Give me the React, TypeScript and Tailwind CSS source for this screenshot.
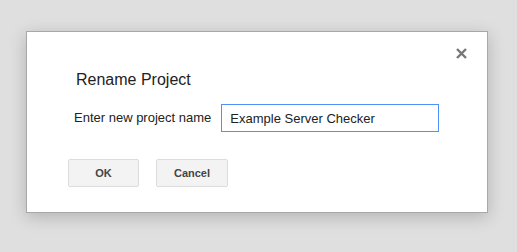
import { useState } from 'react'

export default function App() {
  const [name, setName] = useState('Example Server Checker')

  return (
    <div
      className="w-[517px] h-[252px] bg-[#dfdfdf] pt-[31px] pl-[26px]"
      style={{ fontFamily: '"Liberation Sans", Arial, sans-serif' }}
    >
      <div className="w-[462px] h-[182px] bg-white border border-[#a8a8a8] shadow-[0_4px_16px_rgba(0,0,0,0.2)] pt-[16px]">
        <div className="flex justify-end pr-[20px] h-[11px]">
          <button type="button" aria-label="Close" className="block w-[11px] h-[11px]">
            <svg width="11" height="11" viewBox="0 0 11 11" aria-hidden>
              <path d="M1 1L10 10M10 1L1 10" stroke="#777" strokeWidth="2.4" />
            </svg>
          </button>
        </div>

        <h2 className="mt-[12px] pl-[49px] text-[16px] leading-[18px] text-[#222] font-normal">
          Rename Project
        </h2>

        <div className="mt-[15px] pl-[47px] flex items-center gap-[10px]">
          <label className="text-[13px] text-[#222]">Enter new project name</label>
          <input
            value={name}
            onChange={e => setName(e.target.value)}
            className="w-[218px] h-[28px] border border-[#4d90fe] px-[8px] text-[13px] text-[#222] outline-none"
          />
        </div>

        <div className="mt-[27px] pl-[41px] flex gap-[17px]">
          <button
            type="button"
            className="w-[71px] h-[28px] rounded-[2px] border border-[#dcdcdc] bg-[#f3f3f3] text-[11px] font-bold text-[#444]"
          >
            OK
          </button>
          <button
            type="button"
            className="w-[72px] h-[28px] rounded-[2px] border border-[#dcdcdc] bg-[#f3f3f3] text-[11px] font-bold text-[#444]"
          >
            Cancel
          </button>
        </div>
      </div>
    </div>
  )
}
